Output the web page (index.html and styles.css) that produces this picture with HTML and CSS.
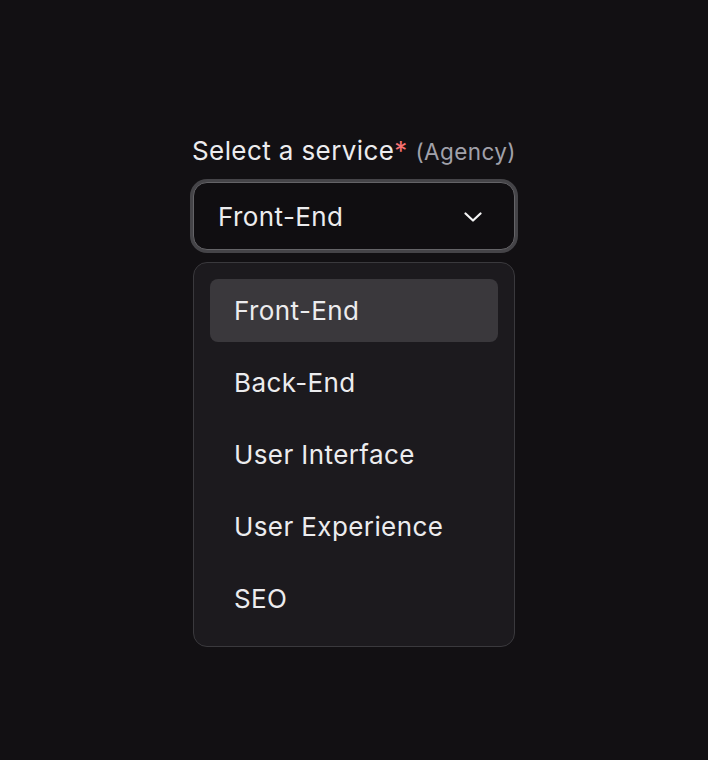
FILE: index.html
```html
<!DOCTYPE html>
<html lang="en">
<head>
<meta charset="utf-8">
<title>Select a service</title>
<link rel="stylesheet" href="styles.css">
</head>
<body>
<main class="page">
  <div class="field">
    <label class="label">Select a service<span class="req">*</span> <span class="hint">(Agency)</span></label>
    <button class="select" type="button">
      <span class="select-value">Front-End</span>
      <svg class="chevron" width="18" height="10" viewBox="0 0 18 10" fill="none" aria-hidden="true">
        <path d="M1.5 1.5L9 8.5L16.5 1.5" stroke="#f4f4f5" stroke-width="2.2" stroke-linecap="round" stroke-linejoin="round"/>
      </svg>
    </button>
    <ul class="menu">
      <li class="option active">Front-End</li>
      <li class="option">Back-End</li>
      <li class="option">User Interface</li>
      <li class="option">User Experience</li>
      <li class="option">SEO</li>
    </ul>
  </div>
</main>
</body>
</html>
```

FILE: styles.css
```css
* { box-sizing: border-box; }
html, body {
  margin: 0;
  padding: 0;
  background: #121013;
}
body {
  font-family: Inter, "Noto Sans", "Liberation Sans", sans-serif;
  color: #ececee;
  height: 760px;
  letter-spacing: 0.4px;
}
.page {
  display: flex;
  justify-content: center;
  padding-top: 135px;
}
.field {
  width: 322px;
  display: flex;
  flex-direction: column;
}
.label {
  font-size: 26px;
  line-height: 32px;
  margin-left: -1px;
  color: #ececee;
  white-space: nowrap;
}
.req {
  color: #f87171;
}
.hint {
  font-size: 22.5px;
  color: #a1a1aa;
}
.select {
  margin-top: 14px;
  height: 68px;
  width: 100%;
  display: flex;
  align-items: center;
  justify-content: space-between;
  padding: 0 32px 0 24px;
  background: #100e11;
  border: 1px solid #646367;
  border-radius: 14px;
  box-shadow: 0 0 0 3px #454448;
  font: inherit;
  font-size: 26px;
  letter-spacing: 0.4px;
  color: #ececee;
  text-align: left;
}
.chevron {
  display: block;
  margin-top: 1px;
}
.menu {
  list-style: none;
  margin: 12px 0 0;
  padding: 16px;
  background: #1c1a1e;
  border: 1px solid #3a393d;
  border-radius: 14px;
  display: flex;
  flex-direction: column;
  gap: 9px;
}
.option {
  height: 63px;
  display: flex;
  align-items: center;
  padding-left: 24px;
  font-size: 26px;
  color: #ececee;
  border-radius: 8px;
}
.option.active {
  background: #3a383c;
}
```
